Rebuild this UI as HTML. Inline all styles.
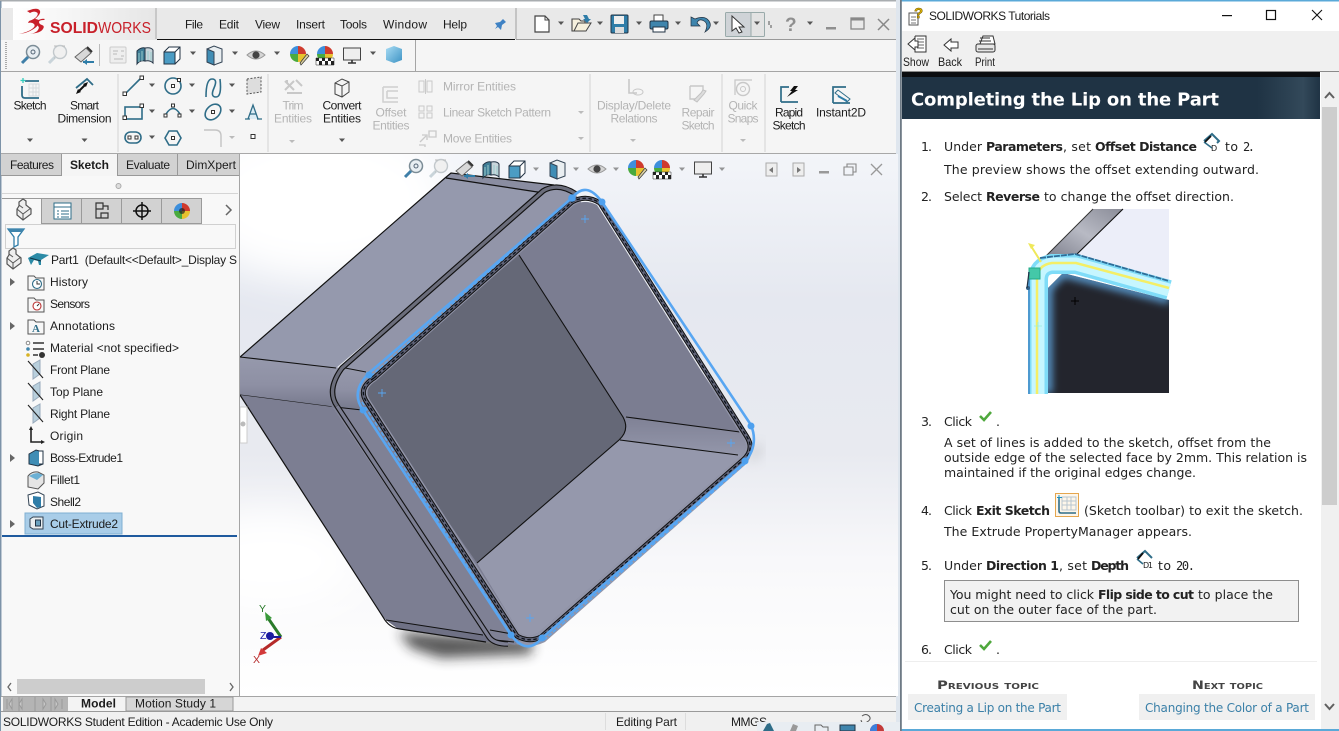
<!DOCTYPE html>
<html><head><meta charset="utf-8"><title>SOLIDWORKS</title>
<style>
html,body{margin:0;padding:0;width:1339px;height:731px;overflow:hidden;background:#fff}
svg{display:block;position:absolute;left:0;top:0}
text{font-family:"Liberation Sans",sans-serif;font-size:12px;fill:#1c1c1c;white-space:pre}
.g text,text.g{fill:#b4b4b4}
.c{text-anchor:middle}
.d text,text.d{font-family:"DejaVu Sans",sans-serif;font-size:12.5px;fill:#222}
text.b{font-weight:bold}
text.m{font-family:"DejaVu Sans Mono",monospace;font-size:12px}
.ic{fill:none;stroke:#2f6d88;stroke-width:1.6}
.gi{fill:none;stroke:#c4c4c4;stroke-width:1.4}
.h{fill:#fff;stroke:#333;stroke-width:1}
</style></head><body>
<svg width="1339" height="731" viewBox="0 0 1339 731" xmlns="http://www.w3.org/2000/svg">
<defs>
<linearGradient id="vp" x1="0" y1="0" x2="0" y2="1"><stop offset="0" stop-color="#f3f5f9"/><stop offset=".27" stop-color="#e5e8f0"/><stop offset=".55" stop-color="#e8eaf0"/><stop offset=".75" stop-color="#f8f8fa"/><stop offset="1" stop-color="#fff"/></linearGradient>
<linearGradient id="fb" x1="0" y1="0" x2="0" y2="1"><stop offset="0" stop-color="#9699ac"/><stop offset=".55" stop-color="#8e90a4"/><stop offset="1" stop-color="#777a8d"/></linearGradient>
<linearGradient id="fb2" x1="0" y1="0" x2="0" y2="1"><stop offset="0" stop-color="#7f8195"/><stop offset="1" stop-color="#9598ac"/></linearGradient>
<linearGradient id="hd" x1="0" y1="0" x2="1" y2="0"><stop offset="0" stop-color="#1f3344"/><stop offset=".85" stop-color="#1f3344"/><stop offset=".96" stop-color="#33495a"/><stop offset="1" stop-color="#1f3344"/></linearGradient>
<linearGradient id="lg" x1="0" y1="0" x2="1" y2="0"><stop offset="0" stop-color="#fff"/><stop offset="1" stop-color="#e6e6e6"/></linearGradient>
<linearGradient id="bc" x1="0" y1="0" x2="1" y2="1"><stop offset="0" stop-color="#a8dcf4"/><stop offset="1" stop-color="#3d93c4"/></linearGradient>
<linearGradient id="gb" x1="0" y1="1" x2="1" y2="0"><stop offset="0" stop-color="#7d7f8c"/><stop offset=".5" stop-color="#b8bac4"/><stop offset="1" stop-color="#8a8c98"/></linearGradient>
<filter id="b5" x="-30%" y="-100%" width="160%" height="300%"><feGaussianBlur stdDeviation="6"/></filter>
<filter id="b20" x="-50%" y="-50%" width="200%" height="200%"><feGaussianBlur stdDeviation="20"/></filter>
<filter id="b2" x="-20%" y="-20%" width="140%" height="140%"><feGaussianBlur stdDeviation="4"/></filter>
<clipPath id="op"><path d="M376 381 L574 205 Q585 199 597 205 L743 438 Q749 448 740 457 L538 633 Q529 638 520 633 L370 400 Q363 389 376 381Z"/></clipPath>
<clipPath id="vc"><rect x="240" y="154" width="658" height="542"/></clipPath>
<clipPath id="tr"><rect x="2" y="250" width="236" height="300"/></clipPath>
<clipPath id="pic"><path d="M1048 393V288L1063 273 1169 300V393z"/></clipPath>
<g id="arr"><path d="M-3-1.5h6l-3 3.5z" fill="#555"/></g>
<g id="mag"><circle cx="3" cy="-3" r="6.5" fill="#e8eef2" stroke="#7b8c96" stroke-width="1.5"/><circle cx="3" cy="-3" r="2" fill="none" stroke="#567" stroke-width="1"/><path d="M-2 2l-6 6" stroke="#3f7fa8" stroke-width="3"/></g>
<g id="magg"><circle cx="3" cy="-3" r="6.5" fill="#f0f0f0" stroke="#c2c8cc" stroke-width="1.4"/><path d="M-2 2l-6 6" stroke="#c9d4da" stroke-width="3"/><path d="M-3-9h3M5-9h3M-3 3h1" stroke="#bbb"/></g>
<g id="lamp"><path d="M-9 2l11-9 5 5-10 9z" fill="#d8d8d8" stroke="#666"/><path d="M3-8l5 5" stroke="#333" stroke-width="2"/><path d="M10 7H-1" stroke="#2f7da8" stroke-width="2"/><path d="M-1 7l4-3v6z" fill="#2f7da8"/></g>
<g id="hlr"><path d="M-8-4q4-4 8-3v13q-5-1-8 3z" fill="#3f7d96" stroke="#234"/><path d="M0-7q6-1 8 2v13q-3-3-8-2z" fill="#c9d6dc" stroke="#234"/><path d="M-6-2v9M-3-4v10M3-4v9M6-3v9" stroke="#9cc" stroke-width="1"/></g>
<g id="box"><path d="M-8-3l5-5h11v12l-5 5z" fill="#fff" stroke="#234"/><path d="M3-3l5-5" stroke="#234"/><path d="M-8-3h11v12h-11z" fill="#4b9cc4" stroke="#234"/></g>
<g id="cube"><path d="M-7-6l7-3 8 3v13l-8 3-7-3z" fill="#e9eef1" stroke="#345"/><path d="M-7-6l7 3v13l-7-3z" fill="#3f8db5" stroke="#345"/></g>
<g id="eye"><path d="M-9 0q9-8 18 0q-9 8-18 0z" fill="#d5d5d5" stroke="#999"/><circle r="3.6" fill="#444"/></g>
<g id="ball"><path d="M0-9a8 8 0 0 1 8 8h-8z" fill="#cf3b2e"/><path d="M-8-1a8 8 0 0 1 8-8v8z" fill="#3d8fdc"/><path d="M-8-1a8 8 0 0 0 8 8v-8z" fill="#4aaa3e"/><path d="M8-1a8 8 0 0 1-8 8v-8z" fill="#e8c22e"/></g>
<g id="ballp"><use href="#ball"/><path d="M2 8L9-1l2 2-8 9z" fill="#d9cfa0" stroke="#333" stroke-width=".7"/></g>
<g id="ballc"><use href="#ball"/><path d="M-9 3h18v7h-18z" fill="#fff" stroke="#222" stroke-width=".5"/><path d="M-9 3h3v3h-3zM-3 3h3v3h-3zM3 3h3v3h-3zM-6 6h3v4h-3zM0 6h3v4h-3zM6 6h3v4h-3z" fill="#222"/></g>
<g id="mon"><rect x="-8.500" y="-7" width="17" height="12" fill="#eee" stroke="#444"/><path d="M-4 8h8M0 5v3" stroke="#333" stroke-width="1.6"/></g>
<g id="fold"><path d="M-8-7h6l2 2h8v12h-16z" fill="#f7f7f7" stroke="#555"/></g>
<g id="plane"><path d="M-3-6l7-4v14l-7 5z" fill="#b8cfdc" stroke="#9ab"/><path d="M-8-9L7 8" stroke="#222" stroke-width="1.1"/></g>
<g id="part"><path d="M-7-1v6l6 5 8-6v-5l-5-4v-4l-3-2-4 3v4z" fill="#eee" stroke="#555" stroke-width="1.2"/><path d="M-7-1l6 5 8-6M-1 4v6M-5-5l4 3" fill="none" stroke="#555"/></g>
<g id="check"><path d="M-6 0l4 4 7-8" fill="none" stroke="#4fa83d" stroke-width="2.600"/></g>
</defs>

<!-- base -->
<rect width="1339" height="731" fill="#fff"/>
<rect x="0" y="0" width="900" height="1.500" fill="#a9adb0"/>
<rect x="0" y="1" width="1.500" height="730" fill="#7d93a8"/>
<rect x="1" y="8" width="895" height="32" fill="#e9e9e9"/>
<rect x="13" y="8" width="143" height="32" fill="url(#lg)"/>
<rect x="155" y="8" width="2" height="31" fill="#c8c8c8"/>
<rect x="157" y="39" width="358" height="1.200" fill="#111"/>
<rect x="515" y="8" width="2" height="31" fill="#c4c4c4"/>
<rect x="516" y="39" width="380" height="1" fill="#999"/>
<rect x="1" y="40" width="895" height="32" fill="#f5f5f5"/>
<rect x="415" y="40" width="1" height="31" fill="#a5a5a5"/>
<rect x="1" y="71" width="895" height="1" fill="#a5a5a5"/>
<rect x="1" y="72" width="895" height="81" fill="#f5f5f5"/>
<rect x="1" y="153" width="895" height="1" fill="#a8a8a8"/>
<rect x="896" y="0" width="4" height="731" fill="#dfe6ee"/>

<!-- logo -->
<path d="M27 11l6-2q6-1 7 2t-5 8q4 0 4 3t-4 6-10 5l-6 1q9-2 13-5t2-5-6-1l1-2q6-2 8-5t-1-4-6 1z" fill="#c8202a"/>
<path d="M36 21q6-3 9-2l-1 1q-5 0-5 2t3 3 1 4-7 4l-6 1q6-1 8-4t-1-5-1-4z" fill="#c8202a"/>
<text x="50" y="33" style="font-size:16px;font-weight:bold;fill:#c8202a" textLength="48" lengthAdjust="spacingAndGlyphs">SOLID</text>
<text x="98" y="33" style="font-size:16px;fill:#c8202a" textLength="53" lengthAdjust="spacingAndGlyphs">WORKS</text>

<!-- menu -->
<text x="185" y="28.500" textLength="18">File</text><text x="219" y="28.500" textLength="20">Edit</text><text x="255" y="28.500" textLength="25">View</text><text x="296" y="28.500" textLength="29">Insert</text><text x="340" y="28.500" textLength="27">Tools</text><text x="383" y="28.500" textLength="44">Window</text><text x="443" y="28.500" textLength="24">Help</text>
<path d="M503 19l3 3-4 3-1 5-3-3-3 2 2-3-2-3 5-1z" fill="#3f82c4"/>

<!-- top right toolbar -->
<path d="M535 16h10l4 4v12h-14z" fill="#fff" stroke="#444" stroke-width="1.200"/><path d="M545 16v4h4" fill="none" stroke="#444"/>
<use href="#arr" x="561" y="23"/>
<path d="M572 31V19h7l2 2h4v10z" fill="#f6f0dc" stroke="#444" stroke-width="1.100"/><path d="M574 31l4-8h13l-5 8z" fill="#f6f0dc" stroke="#444"/><path d="M583 15h4l2 4h2l-4 4-4-4h2z" fill="#2f7da8"/>
<use href="#arr" x="600" y="23"/>
<rect x="611" y="15" width="17" height="18" rx="1" fill="#2f7da8" stroke="#234"/><rect x="614" y="16" width="10" height="8" fill="#eee"/><rect x="615" y="27" width="9" height="6" fill="#ddd"/>
<use href="#arr" x="639" y="23"/>
<path d="M654 21v-6h9v6" fill="#fff" stroke="#444"/><rect x="650" y="21" width="18" height="8" rx="1.500" fill="#3f85ad" stroke="#234"/><rect x="653" y="27" width="12" height="5" fill="#fff" stroke="#234"/>
<use href="#arr" x="678" y="23"/>
<path d="M695 19q10-4 14 2t-4 11q4-8-1-11t-7 2l3 3h-9v-9z" fill="#3f85ad" stroke="#234" stroke-width=".7"/>
<use href="#arr" x="716" y="23"/>
<rect x="725.500" y="12.500" width="39" height="24" rx="1" fill="#e3e3e3" stroke="#9aa"/><rect x="726" y="13" width="25" height="23" fill="#cfd3d7"/><path d="M751 12v24" stroke="#9aa"/>
<path d="M732 16v15l4-3 3 5 3-1-3-5h5z" fill="#fff" stroke="#333"/>
<use href="#arr" x="757" y="23"/>
<path d="M769 21v4M771 25v3" stroke="#555"/>
<text x="785" y="31" style="font-size:19px;font-weight:bold;fill:#8f8f8f">?</text>
<use href="#arr" x="810" y="23"/>
<rect x="826" y="27" width="10" height="2.500" fill="#8f8f8f"/>
<rect x="851" y="18" width="13" height="11" fill="none" stroke="#888" stroke-width="1.300"/><rect x="851" y="18" width="13" height="2.500" fill="#888"/>
<path d="M878 19l11 11M889 19l-11 11" stroke="#888" stroke-width="1.500"/>

<!-- row 2 icons -->
<path d="M6 42v28" stroke="#aaa" stroke-width="2" stroke-dasharray="1 1"/>
<use href="#mag" x="30" y="55"/><use href="#magg" x="57" y="55"/><use href="#lamp" x="84" y="55"/>
<rect x="99" y="44" width="1" height="22" fill="#bbb"/>
<rect x="110" y="47" width="16" height="16" rx="1" fill="#eee" stroke="#ccc"/><path d="M113 51h5M113 54h4M121 51h3M121 56h3M114 59h9" stroke="#bbb"/>
<use href="#hlr" x="145" y="55"/><use href="#box" x="172" y="55"/><use href="#arr" x="193" y="53"/><use href="#cube" x="214" y="55"/><use href="#arr" x="235" y="53"/><use href="#eye" x="256" y="55"/><use href="#arr" x="277" y="53"/><use href="#ballp" x="298" y="55"/><use href="#ballc" x="325" y="55"/><use href="#mon" x="352" y="55"/><use href="#arr" x="373" y="53"/>
<path d="M394 46l8 3v11l-8 3-8-3V49z" fill="url(#bc)"/>

<!-- ribbon -->
<path d="M118 74v78M268 74v78M590 74v78M722 74v78M765 74v78" stroke="#d4d4d4"/>
<path d="M22 86v9q0 3 3 3h14M25 81h14" fill="none" stroke="#2f6d88" stroke-width="1.800"/><path d="M29 84h10v12H29zM29 88h10M29 92h10M33 84v12M36 84v12" fill="none" stroke="#d7dadd"/><path d="M23 78v5M20.500 80.500h5" stroke="#3cb" stroke-width="1.300"/>
<text x="30" y="109.500" class="c" textLength="33">Sketch</text><use href="#arr" x="30" y="140"/>
<path d="M76 88l11-9 6 6" fill="none" stroke="#2f6d88" stroke-width="1.800"/><path d="M78 92l8-8" stroke="#111" stroke-width="2"/><path d="M76 94l2-5 3 3zM88 82l-5 2 3 3z" fill="#111"/>
<text x="84.500" y="109.500" class="c" textLength="29">Smart</text><text x="84.500" y="122.500" class="c" textLength="54">Dimension</text><use href="#arr" x="84.500" y="140"/>
<!-- sketch grid -->
<path d="M125 94l16-16" class="ic"/><rect x="123" y="92" width="3.500" height="3.500" class="h"/><rect x="140" y="76" width="3.500" height="3.500" class="h"/><use href="#arr" x="152" y="85"/>
<circle cx="173" cy="86" r="8" class="ic"/><rect x="171.500" y="84.500" width="3" height="3" class="h"/><rect x="177.500" y="78.500" width="3" height="3" class="h"/><use href="#arr" x="192" y="85"/>
<path d="M206 97q0-18 6-18t2 9 2 9 4-18" class="ic" stroke-width="1.800"/><use href="#arr" x="232" y="85"/>
<path d="M247 79l14-2v15l-14 2z" fill="#ddd" stroke="#555" stroke-dasharray="2 1.500"/>
<rect x="125" y="107" width="17" height="12" class="ic"/><rect x="123" y="116" width="3.500" height="3.500" class="h"/><rect x="140" y="104" width="3.500" height="3.500" class="h"/><use href="#arr" x="152" y="111"/>
<path d="M166 114q7-11 14 0" class="ic"/><rect x="164" y="114" width="3" height="3" class="h"/><rect x="171.500" y="104" width="3" height="3" class="h"/><rect x="178" y="114" width="3" height="3" class="h"/><use href="#arr" x="192" y="111"/>
<ellipse cx="213" cy="112" rx="9" ry="6.500" class="ic" transform="rotate(-45 213 112)" stroke-width="1.800"/><rect x="211.500" y="110.500" width="3" height="3" class="h"/><use href="#arr" x="232" y="111"/>
<path d="M245 119h5M257 119h5M248 119l5-14 5 14M250 114h6" fill="#dcecf4" stroke="#2f6d88" stroke-width="1.300"/>
<rect x="125" y="132" width="16" height="11" rx="5.500" class="ic" stroke-width="1.800"/><rect x="128" y="136" width="3" height="3" class="h"/><rect x="135" y="136" width="3" height="3" class="h"/><use href="#arr" x="152" y="137"/>
<path d="M165 138l4-7h8l4 7-4 7h-8z" class="ic" stroke-width="1.800"/><rect x="171.500" y="136.500" width="3" height="3" class="h"/>
<path d="M204 130h11q6 0 6 6v11" class="gi" stroke-width="1.700"/><path d="M229 136h6l-3 3z" fill="#bbb"/>
<rect x="251" y="134.500" width="4" height="4" class="h"/>

<path d="M285 81l9 9M285 90l9-9M296 80l6 6M287 93h15M287 80v3" stroke="#c8c8c8" stroke-width="2" fill="none"/>
<text x="293" y="109.500" class="c g" textLength="21">Trim</text><text x="293" y="122.500" class="c g" textLength="38">Entities</text><path d="M289 140h6l-3 3z" fill="#bbb"/>
<path d="M335 83l7-4 7 3v10l-7 5-7-3z" fill="#f4f4f4" stroke="#444"/><path d="M335 83l7 3 7-4M342 86v11" fill="none" stroke="#444"/>
<text x="342" y="109.500" class="c" textLength="39">Convert</text><text x="342" y="122.500" class="c" textLength="38">Entities</text><use href="#arr" x="342" y="140"/>
<path d="M383 87h15M383 87v15h15M387 91h11M387 91v7h11" fill="none" stroke="#cfcfcf" stroke-width="1.500"/>
<text x="391" y="116.500" class="c g" textLength="31">Offset</text><text x="391" y="129.500" class="c g" textLength="37">Entities</text>
<path d="M419 81h5v11h-5zM432 81h-5v11h5zM425.500 79v15" fill="none" stroke="#c9c9c9"/>
<text x="443" y="90.500" class="g" textLength="73">Mirror Entities</text>
<path d="M419 106h5v5h-5zM427 106h5v5h-5zM419 113h5v5h-5zM427 113h5v5h-5z" fill="none" stroke="#c9c9c9"/>
<text x="443" y="116.500" class="g" textLength="108">Linear Sketch Pattern</text><path d="M578 111h6l-3 3z" fill="#bbb"/>
<path d="M420 142l6-6M422 135h5v5M429 131h7v6h-7zM419 145h6v2" fill="none" stroke="#c9c9c9" stroke-width="1.300"/>
<text x="443" y="142.500" class="g" textLength="69">Move Entities</text><path d="M578 137h6l-3 3z" fill="#bbb"/>
<path d="M629 79v14h8" fill="none" stroke="#c8c8c8" stroke-width="1.600"/><ellipse cx="638" cy="92" rx="5" ry="3" fill="none" stroke="#c8c8c8"/>
<text x="634" y="109.500" class="c g" textLength="74">Display/Delete</text><text x="634" y="122.500" class="c g" textLength="47">Relations</text><path d="M630 139h6l-3 3z" fill="#bbb"/>
<path d="M690 86h13v7M690 86v13h6" fill="none" stroke="#c8c8c8" stroke-width="1.400"/><path d="M694 100l7-7 2-3 3 1-2 3-7 8z" fill="#ddd" stroke="#c2c2c2"/>
<text x="698" y="116.500" class="c g" textLength="33">Repair</text><text x="698" y="129.500" class="c g" textLength="33">Sketch</text>
<path d="M735 95V80h17" fill="none" stroke="#c8c8c8" stroke-width="1.300"/><circle cx="743" cy="89" r="6.500" fill="none" stroke="#c8c8c8" stroke-width="1.400"/><circle cx="743" cy="89" r="2.500" fill="none" stroke="#c8c8c8"/>
<text x="743" y="109.500" class="c g" textLength="29">Quick</text><text x="743" y="122.500" class="c g" textLength="31">Snaps</text><path d="M740 139h6l-3 3z" fill="#bbb"/>
<path d="M781 102V87h8M781 102h17" fill="none" stroke="#2f6d88" stroke-width="1.700"/><path d="M787 97l5-6h-2l4-5h4l-3 4h3z" fill="#111"/>
<text x="789" y="116.500" class="c" textLength="28">Rapid</text><text x="789" y="129.500" class="c" textLength="33">Sketch</text>
<path d="M833 103V87h13M833 103h17" fill="none" stroke="#2f6d88" stroke-width="1.700"/><path d="M838 90l12 9-3 3-12-9z" fill="#f6f6f6" stroke="#2f6d88"/><path d="M838 96l9 5" stroke="#2f7da8" stroke-width="2"/>
<text x="841" y="116.500" class="c" textLength="50">Instant2D</text>

<!-- tabs -->
<rect x="1" y="154" width="243" height="22" fill="#d2d2d2"/>
<rect x="62" y="154" width="55" height="22" fill="#f5f5f5"/>
<path d="M61.500 154v22M117.500 154v22M177.500 154v22M243.500 154v22M1 175.500h61M117 175.500h127" stroke="#999"/>
<text x="32" y="169" class="c" textLength="44">Features</text><text x="89.500" y="169" class="c b" textLength="39">Sketch</text><text x="148" y="169" class="c" textLength="44">Evaluate</text><text x="211" y="169" class="c" textLength="50">DimXpert</text>

<!-- viewport -->
<rect x="240" y="154" width="658" height="542" fill="url(#vp)"/>
<g clip-path="url(#vc)">
<ellipse cx="320" cy="200" rx="130" ry="80" fill="#fff" filter="url(#b20)"/>
<ellipse cx="270" cy="560" rx="90" ry="50" fill="#fff" filter="url(#b20)"/>
<path d="M398 632l135 8-2 14-90 4-30-10z" fill="#222" filter="url(#b5)" opacity=".75"/>
<path d="M752 448l10-4-2 10-10 10z" fill="#888" filter="url(#b5)" opacity=".35"/>
<!-- back body -->
<path d="M240 357L445 178 451 173 554 185 572 193 544 193 336 368z" fill="#9599ad"/>
<path d="M445 178L451 173 554 185 572 193 544 193z" fill="#8a8da1"/>
<path d="M240 357L445 178 451 173 554 185" fill="none" stroke="#111" stroke-width="1.200"/>
<path d="M446 178L544 193" stroke="#111" stroke-width="1.200"/>
<path d="M240 357L342 368 333 407 240 395z" fill="url(#fb)"/>
<path d="M240 357L336 368M240 395L333 407" stroke="#111" stroke-width="1.100"/>
<path d="M240 395L333 407 490 640 440 635 397 628 386 620 383 617z" fill="#7c7e92"/>
<path d="M386 620L483 635 498 643 415 632 397 628z" fill="#6f7185"/>
<path d="M240 395L383 617Q389 628 400 629L486 642" fill="none" stroke="#111" stroke-width="1.200"/>
<path d="M386 620L483 635" stroke="#111" stroke-width="1.100"/>
<!-- lip -->
<path d="M496 643L333 407Q325 390 340 369L543 190Q556 183 574 192L750 440Q755 455 745 465L545 642Q528 650 511 642z" fill="#9295a9"/>
<path d="M340 407L333 407 490 640 515 645 520 640 366 401z" fill="#7f8195"/>
<path d="M333 370L344 366 375 373 362 395 362 409 332 408Q327 388 333 370z" fill="url(#fb)"/>
<path d="M340 367L366 372M335 407L362 410M490 630L512 634M495 640L514 642" stroke="#111" stroke-width="1.100"/>
<!-- lower lip double line -->
<path d="M508 644Q494 644 489 637L337 406" fill="none" stroke="#111" stroke-width="5.500"/>
<path d="M508 644Q494 644 489 637L337 406" fill="none" stroke="#7c7e92" stroke-width="3.300"/>
<!-- upper lip band -->
<path d="M337 406Q326 390 342 368L543 191Q558 182 576 194" fill="none" stroke="#111" stroke-width="5.500"/>
<path d="M337 406Q326 390 342 368L543 191Q558 182 576 194" fill="none" stroke="#6b6d7b" stroke-width="3.200"/>
<!-- opening -->
<path d="M376 381L574 205Q585 199 597 205L743 438Q749 448 740 457L538 633Q529 638 520 633L370 400Q363 389 376 381Z" fill="#7c7e92"/>
<g clip-path="url(#op)">
<path d="M519 255L590 195 755 440 626 417z" fill="#7b7d91"/>
<path d="M626 417L750 433 750 458 620 440z" fill="url(#fb2)"/>
<path d="M620 440L750 457 530 650 477 563z" fill="#9598ac"/>
<path d="M519 255L623 417Q630 430 619 440L477 563 360 395 370 378z" fill="#656877"/>
<path d="M519 255L623 417Q630 430 619 440L477 563" fill="none" stroke="#111" stroke-width="1.100"/>
<path d="M626 417L740 432M620 440L738 455" stroke="#111" stroke-width="1.100"/>
</g>
<!-- rim -->
<path d="M374 378L572 202Q586 194 600 203L747 437Q755 450 743 460L541 637Q529 643 517 636L366 401Q358 388 374 378Z" fill="none" stroke="#111" stroke-width="5"/>
<path d="M374 378L572 202Q586 194 600 203L747 437Q755 450 743 460L541 637Q529 643 517 636L366 401Q358 388 374 378Z" fill="none" stroke="#62657a" stroke-width="3"/>
<path d="M374 378L572 202Q586 194 600 203L747 437Q755 450 743 460L541 637Q529 643 517 636L366 401Q358 388 374 378Z" fill="none" stroke="#0b1118" stroke-width="1.300" stroke-dasharray="3.500 2.500"/>
<path d="M371 376L570 200M362 402L513 637M544 640L746 463" fill="none" stroke="#58a6f2" stroke-width="1.600" stroke-dasharray="4 2"/>
<!-- blue offset -->
<path d="M363 410L511 635Q527 656 542 638L745 462Q759 445 751 425L602 202Q586 180 572 198L369 373Q350 392 363 410Z" fill="none" stroke="#58a6f2" stroke-width="2.600"/>
<g fill="#4ea0ee"><circle cx="369" cy="375" r="3.500"/><circle cx="363" cy="410" r="3.500"/><circle cx="572" cy="198" r="3.800"/><circle cx="602" cy="202" r="3.500"/><circle cx="751" cy="426" r="3.500"/><circle cx="745" cy="461" r="3.500"/><circle cx="511" cy="635" r="3.500"/><circle cx="542" cy="638" r="3.500"/></g>
<path d="M585 215v8M581 219h8M382 389v8M378 393h8M731 439v8M727 443h8M530 614v8M526 618h8" stroke="#58a6f2" stroke-width=".9"/>
<!-- triad -->
<path d="M281 637L268 618" stroke="#2a7a2a" stroke-width="3"/><path d="M265 612l7 6-6 3z" fill="#3a9a3a"/>
<path d="M281 637L263 650" stroke="#b52a2a" stroke-width="3"/><path d="M258 656l3-8 6 5z" fill="#d33a3a"/>
<path d="M281 637l-10 0" stroke="#1c1c9c" stroke-width="2"/><circle cx="270" cy="636" r="4" fill="#1c1ca0"/>
<text x="259" y="612" style="font-size:10.500px;fill:#2a7a2a">Y</text>
<text x="260" y="639" style="font-size:10.500px;fill:#2222aa">Z</text>
<text x="253" y="663" style="font-size:10.500px;fill:#b52a2a">X</text>
<!-- viewport toolbar -->
<use href="#mag" x="413" y="169"/><use href="#magg" x="438" y="169"/><use href="#lamp" x="465" y="169"/><use href="#hlr" x="491" y="169"/><use href="#box" x="517" y="169"/><use href="#arr" x="536" y="169" opacity=".6"/><use href="#cube" x="557" y="169"/><use href="#arr" x="576" y="169" opacity=".6"/><use href="#eye" x="597" y="169"/><use href="#arr" x="616" y="169" opacity=".6"/><use href="#ballp" x="636" y="169"/><use href="#ballc" x="662" y="169"/><use href="#arr" x="682" y="169" opacity=".6"/><use href="#mon" x="703" y="169"/><use href="#arr" x="722" y="169" opacity=".6"/>
<rect x="766" y="163" width="11" height="13" fill="#eee" stroke="#aaa"/><path d="M773 167l-4 3 4 3z" fill="#777"/>
<rect x="793" y="163" width="11" height="13" fill="#eee" stroke="#aaa"/><path d="M797 167l4 3-4 3z" fill="#777"/>
<rect x="819" y="171" width="10" height="2.500" fill="#999"/>
<path d="M844 167h9v8h-9zM847 167v-3h9v8h-3" fill="none" stroke="#888" stroke-width="1.100"/>
<path d="M871 164l11 11M882 164l-11 11" stroke="#999" stroke-width="1.300"/>
</g>
<rect x="240" y="407" width="7" height="36" fill="#fff" stroke="#ccc"/><circle cx="243" cy="424" r="2.500" fill="#bbb"/>

<!-- left panel -->
<rect x="2" y="176" width="237" height="520" fill="#f8f8f8"/>
<rect x="239" y="154" width="1" height="542" fill="#a5a5a5"/>
<circle cx="118.500" cy="186" r="2.500" fill="#ddd" stroke="#aaa"/>
<rect x="2" y="193" width="236" height="1" fill="#d5d5d5"/>
<rect x="42" y="198" width="160" height="26" fill="#d2d2d2"/>
<path d="M2 198.500H201.500V224M41.500 198v26M81.500 198v26M121.500 198v26M161.500 198v26M42 223.500H202" fill="none" stroke="#9a9a9a"/>
<use href="#part" x="24" y="210"/>
<rect x="54" y="203" width="17" height="16" fill="#fff" stroke="#2f6d88"/><path d="M54 207h17M57 211h2M61 211h8M57 214h2M61 214h8M57 217h2M61 217h8" stroke="#2f6d88"/>
<path d="M96 203h7v6h-7zM96 209v9h5M101 213h7v5h-7zM103 206h5v4" fill="none" stroke="#333" stroke-width="1.200"/>
<circle cx="142" cy="211" r="6" fill="none" stroke="#111" stroke-width="1.500"/><path d="M142 202v18M133 211h18" stroke="#111" stroke-width="1.500"/>
<use href="#ball" x="182" y="212"/><circle cx="182" cy="211" r="3" fill="#222" opacity=".7"/>
<path d="M226 205l5 5-5 5" fill="none" stroke="#666" stroke-width="1.500"/>
<rect x="5.500" y="224.500" width="230" height="24" fill="#f8f8f8" stroke="#d0d0d0"/>
<path d="M8 229h16l-6 8v8l-4 2v-10z" fill="#fff" stroke="#2f7da8" stroke-width="1.300"/><path d="M8 229h16l-2 3H10z" fill="#3f85ad"/>

<!-- tree -->
<use href="#part" x="14" y="259"/>
<path d="M28 258l9-5 12 2-8 5v5h-2l-1-4-4-1-3 5z" fill="#2b8aa6"/><path d="M30 258l11 3" stroke="#134" stroke-width="1"/>
<g clip-path="url(#tr)"><text x="51" y="264" textLength="186">Part1  (Default&lt;&lt;Default&gt;_Display S</text></g>
<path d="M10 278l5 4-5 4zM10 322l5 4-5 4zM10 454l5 4-5 4zM10 520l5 4-5 4z" fill="#666"/>
<use href="#fold" x="36" y="283"/><circle cx="37" cy="284" r="4.500" fill="#fff" stroke="#2f6d88" stroke-width="1.100"/><path d="M37 281v3h3" stroke="#333" fill="none"/>
<text x="50" y="286" textLength="38">History</text>
<use href="#fold" x="36" y="305"/><circle cx="37" cy="306" r="4" fill="#fff" stroke="#b33" stroke-width="1.100"/><path d="M37 306l2-2" stroke="#333"/>
<text x="50" y="308" textLength="40">Sensors</text>
<use href="#fold" x="36" y="327"/><text x="32" y="332" style="font-size:11px;font-weight:bold;fill:#2f6d88;font-family:'Liberation Serif',serif">A</text>
<text x="50" y="330" textLength="65">Annotations</text>
<circle cx="28" cy="343" r="1.800" fill="#fff" stroke="#888"/><circle cx="28" cy="349" r="1.800" fill="#3f85ad"/><circle cx="28" cy="355" r="1.800" fill="#d8b324"/><path d="M33 343h11M33 349h11M33 355h5" stroke="#333" stroke-width="1.600"/><circle cx="42" cy="355" r="3" fill="#333"/>
<text x="50" y="352" textLength="129">Material &lt;not specified&gt;</text>
<use href="#plane" x="36" y="370"/><text x="50" y="374" textLength="60">Front Plane</text>
<use href="#plane" x="36" y="392"/><text x="50" y="396" textLength="53">Top Plane</text>
<use href="#plane" x="36" y="414"/><text x="50" y="418" textLength="60">Right Plane</text>
<path d="M31 428v14h12" fill="none" stroke="#222" stroke-width="1.600"/><path d="M29 430l2-4 2 4zM41 440l4 2-4 2z" fill="#222"/>
<text x="50" y="440" textLength="33">Origin</text>
<path d="M29 454l7-4 7 2v12l-5 2-9-2z" fill="#3f8db5" stroke="#234"/><path d="M39 451h4v13h-4" fill="#fff" stroke="#234"/>
<text x="50" y="462" textLength="73">Boss-Extrude1</text>
<path d="M28 476q4-5 10-4l6 3v8l-6 6-10-2z" fill="#e5e5e5" stroke="#555"/><path d="M29 476q5-3 9-3l5 2-6 5z" fill="#6bb0d4"/>
<text x="50" y="484" textLength="30">Fillet1</text>
<path d="M28 495l10-3 6 3v11l-7 3-8-4z" fill="#fff" stroke="#345"/><path d="M33 496l8 1v10l-4 1-4-5z" fill="#2f7da8"/>
<text x="50" y="506" textLength="31">Shell2</text>
<rect x="25" y="513" width="97" height="21" fill="#a9cde8" stroke="#7fb0d2"/>
<path d="M30 519l3-2h10v12H33l-3-2z" fill="#e9eef0" stroke="#345"/><rect x="35.500" y="520" width="5" height="6" fill="#6aa2c0" stroke="#234"/>
<text x="50" y="528" textLength="68">Cut-Extrude2</text>
<rect x="2" y="535" width="235" height="2" fill="#1f5a9e"/>

<!-- hscroll -->
<rect x="17" y="679" width="188" height="15" fill="#cdcdcd"/>
<path d="M11 683l-3 4 3 4M230 683l3 4-3 4" fill="none" stroke="#666" stroke-width="1.300"/>

<!-- bottom tabs -->
<rect x="1" y="696" width="895" height="1" fill="#a5a5a5"/>
<rect x="1" y="697" width="895" height="15" fill="#f3f3f3"/>
<rect x="3" y="697" width="65" height="14" fill="#b4b4b4"/>
<path d="M7 699v10M12 699l-3 5 3 5zM22 699l-3 5 3 5zM43 699l3 5-3 5zM55 699l3 5-3 5zM62 699v10M19 697v14M35 697v14M51 697v14" stroke="#9a9a9a" fill="#c8c8c8"/>
<rect x="126" y="697" width="107" height="14" fill="#d6d6d6" stroke="#999"/>
<text x="81" y="707.500" class="b" textLength="35">Model</text>
<text x="135" y="707.500" textLength="81">Motion Study 1</text>
<rect x="1" y="711" width="895" height="1" fill="#9a9a9a"/>
<rect x="1" y="712" width="895" height="19" fill="#f0f0f0"/>
<text x="3" y="726" textLength="270">SOLIDWORKS Student Edition - Academic Use Only</text>
<path d="M605.500 713v17M685.500 713v17" stroke="#ddd"/>
<text x="616" y="726" textLength="61">Editing Part</text>
<text x="731" y="726" textLength="36">MMGS</text>
<path d="M862 716q4-3 7 0t-2 6-6-2" fill="none" stroke="#555"/>
<!-- taskbar fragment -->
<rect x="757" y="722" width="143" height="9" fill="#e8edf2"/>
<path d="M770 731l-7 0 4-7 3-1 4 8z" fill="#2f6d88"/>
<path d="M793 724l5 2-2 5h-6z" fill="#999"/><path d="M815 731v-6h6l2 2h5v4" fill="none" stroke="#666"/><rect x="840" y="725" width="15" height="6" fill="#3f85ad" stroke="#234"/>
<circle cx="877" cy="731" r="7" fill="#c23a3a"/><path d="M870 731a7 7 0 0 1 7-7v7z" fill="#3d7fdc"/>

<!-- tutorials window -->
<rect x="900" y="0" width="439" height="731" fill="#fff"/>
<rect x="900" y="0" width="439" height="1.500" fill="#5aa9d8"/>
<rect x="900" y="729" width="439" height="2" fill="#5aa9d8"/>
<rect x="900" y="0" width="1.800" height="731" fill="#6e7a85"/>
<path d="M909 13h9v12h-9z" fill="#fff" stroke="#555"/><path d="M911 17h5M911 20h5M911 23h5" stroke="#777"/>
<text x="914" y="18" style="font-size:15px;font-weight:bold;fill:#e0b400;stroke:#665000;stroke-width:.5">?</text>
<text x="929" y="20" textLength="121">SOLIDWORKS Tutorials</text>
<rect x="1222" y="15" width="10" height="1.200" fill="#111"/>
<rect x="1266.500" y="10.500" width="9" height="9" fill="none" stroke="#111" stroke-width="1.200"/>
<path d="M1312 10l10 10M1322 10l-10 10" stroke="#111" stroke-width="1.100"/>
<rect x="902" y="31" width="437" height="40" fill="#f0f0f0"/>
<rect x="902" y="71" width="437" height="1" fill="#8a8a8a"/>
<path d="M915 36h11v16h-11v-4M915 40v-4" fill="#fff" stroke="#333"/><path d="M917 39h7M917 42h7M917 45h7M917 48h7" stroke="#666"/>
<path d="M908 44l7-6v3h3v6h-3v3z" fill="#fff" stroke="#333"/>
<path d="M944 45l7-6v3h7v6h-7v3z" fill="#fff" stroke="#333"/>
<path d="M980 44l3-8h10l2 8z" fill="#fff" stroke="#333"/><rect x="976" y="44" width="19" height="8" rx="2" fill="#e6e6e6" stroke="#333"/><path d="M978 49h15M980 38h10M979 41h12" stroke="#333"/>
<text x="903" y="66" textLength="26" lengthAdjust="spacingAndGlyphs">Show</text>
<text x="938" y="66" textLength="24" lengthAdjust="spacingAndGlyphs">Back</text>
<text x="975" y="66" textLength="20" lengthAdjust="spacingAndGlyphs">Print</text>

<rect x="902" y="72" width="418" height="5" fill="#0b0d10"/>
<rect x="902" y="77" width="418" height="42" fill="url(#hd)"/>
<text x="911" y="105.500" style="font-family:'DejaVu Sans',sans-serif;font-size:18px;font-weight:bold;fill:#fff" textLength="308">Completing the Lip on the Part</text>
<rect x="1321" y="72" width="18" height="657" fill="#f0f0f0"/>
<rect x="1322" y="107" width="15" height="398" fill="#cdcdcd"/>
<path d="M1325 98l4.500-5 4.500 5" fill="none" stroke="#606060" stroke-width="2"/>
<path d="M1325 704l4.500 5 4.500-5" fill="none" stroke="#606060" stroke-width="2"/>

<g class="d">
<text x="921" y="151" textLength="11">1.</text>
<text x="944" y="151" textLength="38">Under</text><text x="986" y="151" class="b" textLength="77">Parameters</text><text x="1063" y="151" textLength="28">, set</text><text x="1095" y="151" class="b" textLength="102">Offset Distance</text>
<text x="1225" y="151" textLength="13">to</text><text x="1243" y="151" class="m" textLength="12">2.</text>
<text x="944" y="174" textLength="315">The preview shows the offset extending outward.</text>
<text x="921" y="201" textLength="11">2.</text>
<text x="944" y="201" textLength="38">Select</text><text x="986" y="201" class="b" textLength="54">Reverse</text><text x="1044" y="201" textLength="190">to change the offset direction.</text>
<text x="921" y="426" textLength="11">3.</text><text x="944" y="426" textLength="28">Click</text><text x="996" y="426">.</text>
<text x="944" y="447" textLength="327">A set of lines is added to the sketch, offset from the</text>
<text x="944" y="462" textLength="363">outside edge of the selected face by 2mm. This relation is</text>
<text x="944" y="477" textLength="252">maintained if the original edges change.</text>
<text x="921" y="515" textLength="11">4.</text><text x="944" y="515" textLength="28">Click</text><text x="976" y="515" class="b" textLength="74">Exit Sketch</text><text x="1084" y="515" textLength="219">(Sketch toolbar) to exit the sketch.</text>
<text x="944" y="536" textLength="248">The Extrude PropertyManager appears.</text>
<text x="921" y="570" textLength="11">5.</text><text x="944" y="570" textLength="38">Under</text><text x="986" y="570" class="b" textLength="73">Direction 1</text><text x="1059" y="570" textLength="28">, set</text><text x="1091" y="570" class="b" textLength="38">Depth</text><text x="1158" y="570" textLength="13">to</text><text x="1176" y="570" class="m" textLength="19">20.</text>
<text x="921" y="654" textLength="11">6.</text><text x="944" y="654" textLength="28">Click</text><text x="996" y="654">.</text>
</g>
<!-- small inline icons -->
<path d="M1204 141l8-7 7 7-2 2" fill="none" stroke="#2f6d88" stroke-width="2"/><path d="M1204 142l8 6" stroke="#2f6d88" stroke-width="1.600"/><path d="M1205 142l6-6" stroke="#111" stroke-width="1.800"/><text x="1211" y="151" style="font-size:8px;font-family:'DejaVu Sans',sans-serif">D</text>
<use href="#check" x="986" y="416"/><use href="#check" x="986" y="645"/>
<rect x="1055.500" y="493.500" width="23" height="23" fill="#fdf6ea" stroke="#e5a64e"/>
<path d="M1059 498v13q0 2 2 2h15" fill="none" stroke="#2f6d88" stroke-width="1.600"/><path d="M1062 497h14v13h-14zM1062 501h14M1062 505h14M1067 497v13M1071 497v13" fill="none" stroke="#b9c6d0"/><path d="M1059 495v5M1057 497.500h5" stroke="#1e90c0"/>
<path d="M1137 558l8-7 7 7" fill="none" stroke="#2f6d88" stroke-width="2"/><path d="M1137 559l6 5" stroke="#2f6d88" stroke-width="1.600"/><path d="M1138 559l5-6" stroke="#111" stroke-width="1.800"/><text x="1143" y="568" style="font-size:8px;font-family:'DejaVu Sans',sans-serif" textLength="10">D1</text>

<!-- picture -->
<rect x="1027" y="209" width="142" height="185" fill="#fff"/>
<path d="M1123 209H1169V282L1077 255z" fill="#eceef9"/>
<path d="M1093 209H1123L1075 256 1045 257z" fill="url(#gb)"/><path d="M1093 209l-48 48" stroke="#333"/><path d="M1123 209l-48 47" stroke="#111" stroke-width="1.100"/>
<path d="M1048 393V288L1063 273 1169 300V393z" fill="#23252d"/>
<g clip-path="url(#pic)"><path d="M1048 393V288L1063 273 1169 300" fill="none" stroke="#5b9fd6" stroke-width="8" filter="url(#b2)"/></g>
<path d="M1038 394V280Q1038 266 1052 264L1076 264 1169 290" fill="none" stroke="#7fdcf8" stroke-width="20"/>
<path d="M1038 394V280Q1038 266 1052 264L1076 264 1169 290" fill="none" stroke="#c6f6ff" stroke-width="13"/>
<path d="M1029 394V272" stroke="#4e9ad0" stroke-width="2"/>
<path d="M1037 394V280Q1037 265 1052 263L1076 263 1169 288" fill="none" stroke="#f4ee66" stroke-width="2.500"/>
<path d="M1040 258L1075 254 1169 281" fill="none" stroke="#2f6d98" stroke-width="1.800" stroke-dasharray="6 1"/>
<rect x="1029" y="268" width="11" height="11" fill="#44c8a8" stroke="#2a8"/>
<path d="M1041 262l-10-16" stroke="#efe85a" stroke-width="2"/><path d="M1028 243l7 2-4 4z" fill="#efe85a"/>
<circle cx="1028" cy="288" r="2" fill="#2f5f88"/><path d="M1029 272l-2 16" stroke="#234" stroke-width="1.200"/>
<path d="M1071 301h8M1075 297v8" stroke="#000"/><path d="M1034 326h8M1038 322v8" stroke="#9ed" stroke-width=".8"/>

<!-- note -->
<rect x="944.500" y="580.500" width="354" height="41" fill="#f2f2f2" stroke="#8e8e8e"/>
<g class="d">
<text x="950" y="599" textLength="144">You might need to click</text><text x="1098" y="599" class="b" textLength="96">Flip side to cut</text><text x="1198" y="599" textLength="75">to place the</text>
<text x="950" y="614" textLength="207">cut on the outer face of the part.</text>
</g>
<rect x="905" y="661" width="412" height="1" fill="#eeeeee"/>
<text x="937" y="689" textLength="102" lengthAdjust="spacingAndGlyphs" style="font-family:'DejaVu Sans',sans-serif;font-weight:bold;font-size:11.500px;font-variant:small-caps;fill:#444">Previous topic</text>
<text x="1192" y="689" textLength="71" lengthAdjust="spacingAndGlyphs" style="font-family:'DejaVu Sans',sans-serif;font-weight:bold;font-size:11.500px;font-variant:small-caps;fill:#444">Next topic</text>
<rect x="908" y="694" width="159" height="26" fill="#f0f0f0"/>
<rect x="1139" y="694" width="176" height="26" fill="#f0f0f0"/>
<text x="914" y="712" textLength="147" style="font-family:'DejaVu Sans',sans-serif;font-size:12px;fill:#3b80a8">Creating a Lip on the Part</text>
<text x="1145" y="712" textLength="164" style="font-family:'DejaVu Sans',sans-serif;font-size:12px;fill:#3b80a8">Changing the Color of a Part</text>
</svg>
</body></html>
